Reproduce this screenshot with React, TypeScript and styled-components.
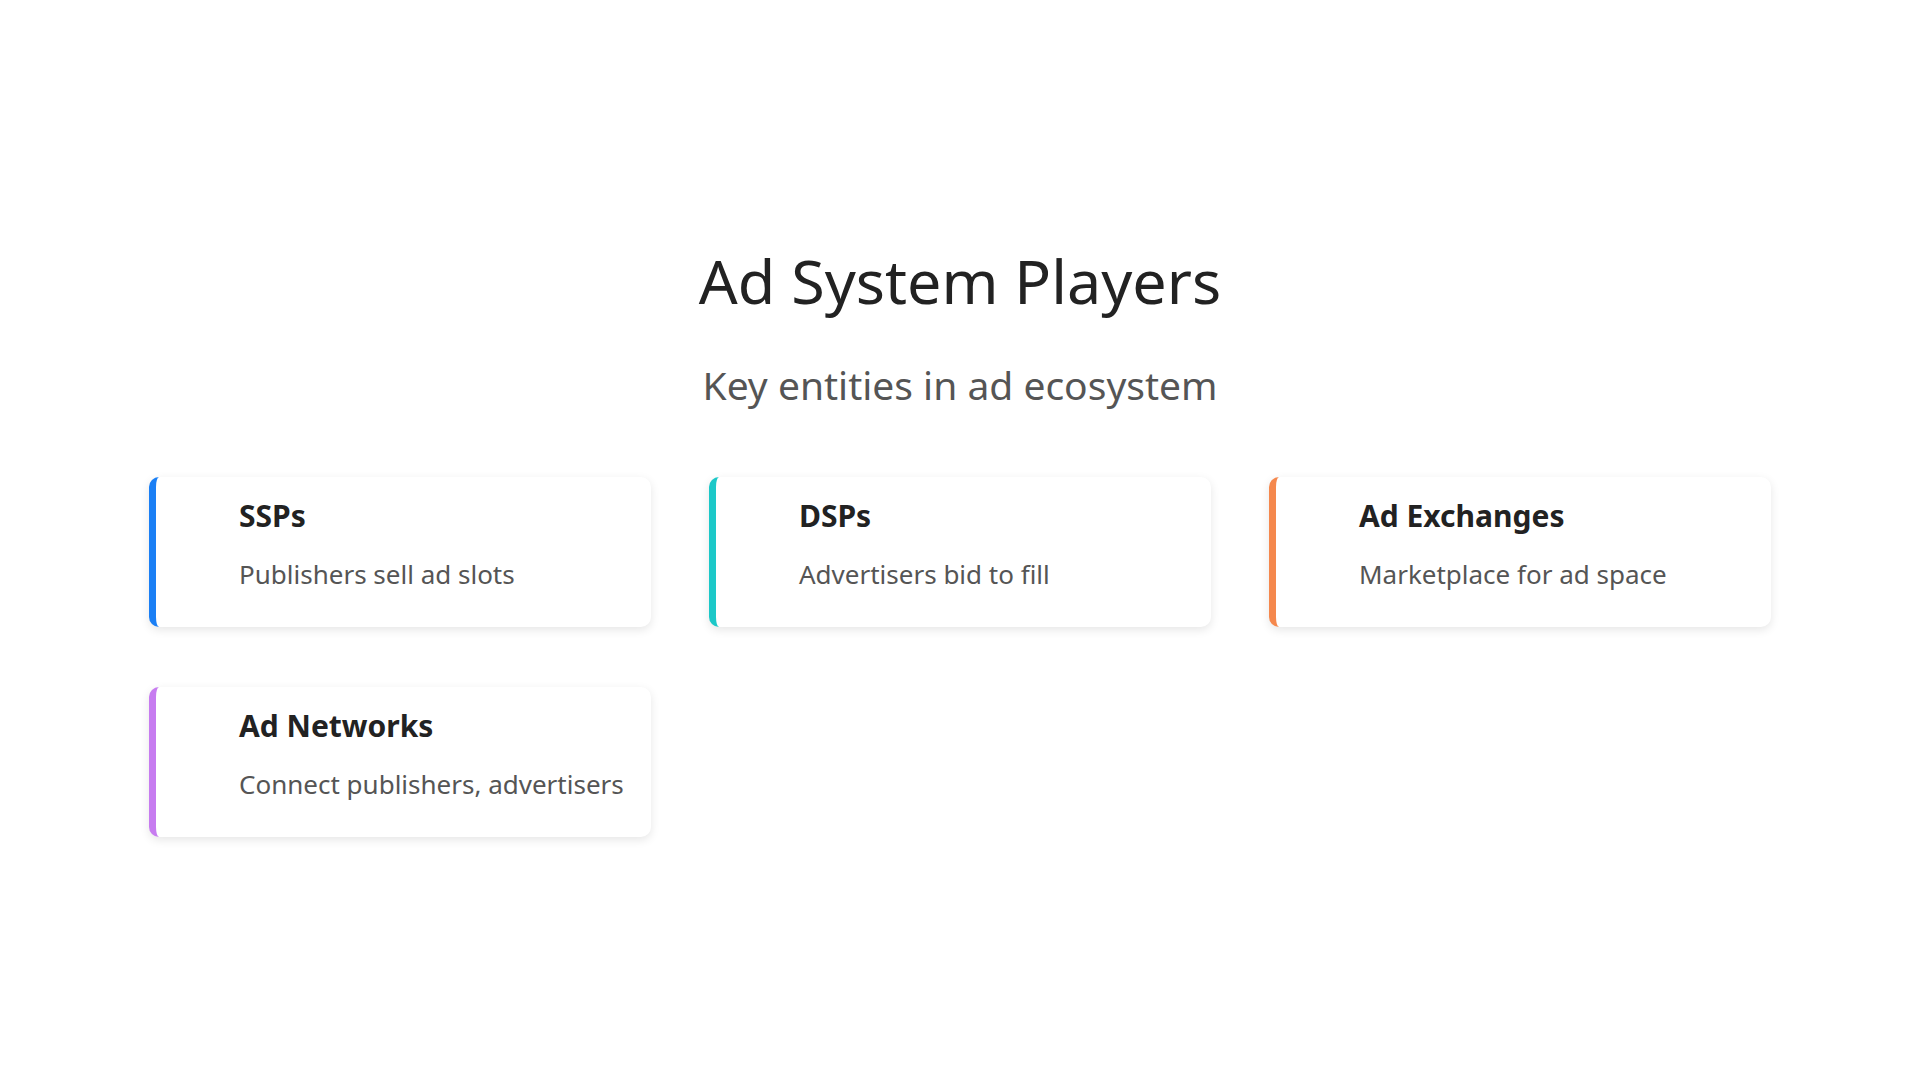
import React from "react";
import styled, { createGlobalStyle } from "styled-components";

const Global = createGlobalStyle`
  html, body { margin: 0; padding: 0; background: #fff; }
  body { font-family: "Noto Sans", "Open Sans", sans-serif; }
`;

const Page = styled.div`
  width: 1920px; height: 1080px; box-sizing: border-box;
  display: flex; flex-direction: column; align-items: center;
  padding-top: 238px;
`;
const Title = styled.h1`
  margin: 0; font-size: 61px; font-weight: 400; color: #222; line-height: 86px;
`;
const Subtitle = styled.h2`
  margin: 33px 0 0; font-size: 39px; font-weight: 400; color: #555; line-height: 56px;
`;
const Grid = styled.div`
  margin-top: 64px; width: 1622px;
  display: grid; grid-template-columns: repeat(3, 502px); column-gap: 58px; row-gap: 60px;
`;
const Card = styled.div<{ $c: string }>`
  height: 150px; box-sizing: border-box; background: #fff; border-radius: 10px;
  border-left: 7px solid ${p => p.$c};
  box-shadow: 0 3px 10px rgba(0,0,0,0.1);
  padding: 19px 20px 0 83px;
`;
const CardTitle = styled.div`
  font-size: 30px; font-weight: 700; color: #222; line-height: 40px;
`;
const CardDesc = styled.div`
  margin-top: 20px; font-size: 26px; color: #555; line-height: 36px;
`;

const items = [
  ["SSPs", "Publishers sell ad slots", "#1a7ff5"],
  ["DSPs", "Advertisers bid to fill", "#1cc8c8"],
  ["Ad Exchanges", "Marketplace for ad space", "#f5884d"],
  ["Ad Networks", "Connect publishers, advertisers", "#c77cf0"],
];

export default function App() {
  return (
    <Page>
      <Global />
      <Title>Ad System Players</Title>
      <Subtitle>Key entities in ad ecosystem</Subtitle>
      <Grid>
        {items.map(([t, d, c]) => (
          <Card key={t} $c={c}>
            <CardTitle>{t}</CardTitle>
            <CardDesc>{d}</CardDesc>
          </Card>
        ))}
      </Grid>
    </Page>
  );
}
